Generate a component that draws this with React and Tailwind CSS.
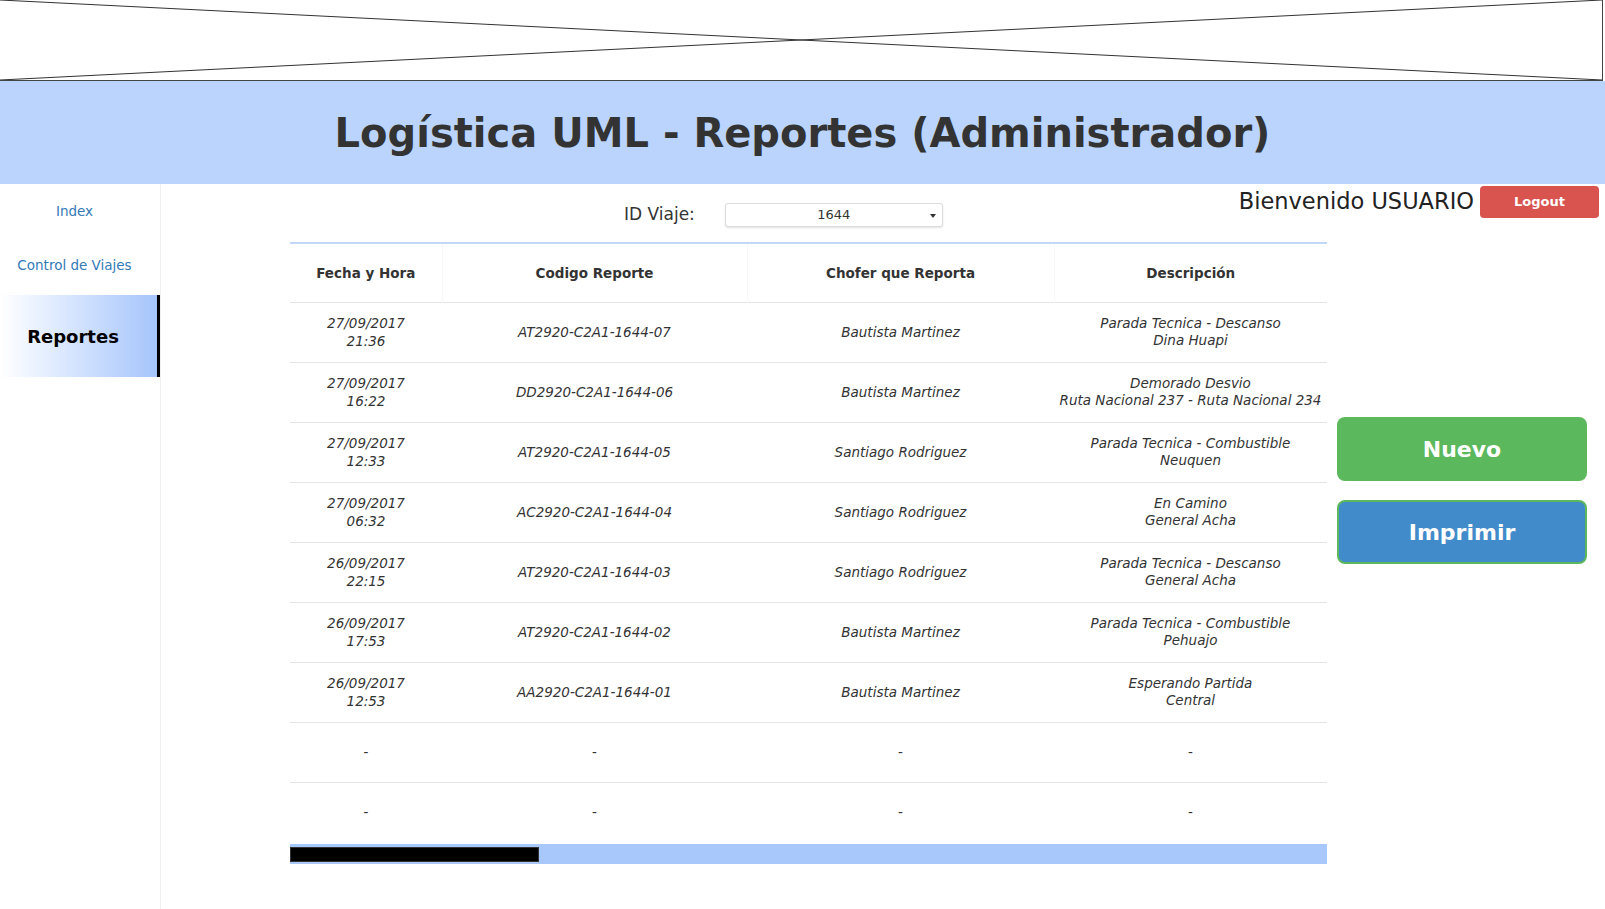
import { useState } from 'react';

const reports = [
  { date: '27/09/2017', time: '21:36', code: 'AT2920-C2A1-1644-07', driver: 'Bautista Martinez', desc: 'Parada Tecnica - Descanso', place: 'Dina Huapi' },
  { date: '27/09/2017', time: '16:22', code: 'DD2920-C2A1-1644-06', driver: 'Bautista Martinez', desc: 'Demorado Desvio', place: 'Ruta Nacional 237 - Ruta Nacional 234' },
  { date: '27/09/2017', time: '12:33', code: 'AT2920-C2A1-1644-05', driver: 'Santiago Rodriguez', desc: 'Parada Tecnica - Combustible', place: 'Neuquen' },
  { date: '27/09/2017', time: '06:32', code: 'AC2920-C2A1-1644-04', driver: 'Santiago Rodriguez', desc: 'En Camino', place: 'General Acha' },
  { date: '26/09/2017', time: '22:15', code: 'AT2920-C2A1-1644-03', driver: 'Santiago Rodriguez', desc: 'Parada Tecnica - Descanso', place: 'General Acha' },
  { date: '26/09/2017', time: '17:53', code: 'AT2920-C2A1-1644-02', driver: 'Bautista Martinez', desc: 'Parada Tecnica - Combustible', place: 'Pehuajo' },
  { date: '26/09/2017', time: '12:53', code: 'AA2920-C2A1-1644-01', driver: 'Bautista Martinez', desc: 'Esperando Partida', place: 'Central' },
];

const navItems = ['Index', 'Control de Viajes'];

export default function App() {
  const [viaje] = useState('1644');

  return (
    <div className="min-h-screen bg-white font-['DejaVu_Sans',Verdana,sans-serif] text-[#333]">
      {/* image placeholder */}
      <div className="h-[81px] w-[1603px] border-r border-b border-[#444]">
        <svg className="block h-full w-full" viewBox="0 0 1602 80" preserveAspectRatio="none">
          <line x1="0" y1="0" x2="1602" y2="80" stroke="#333" strokeWidth="1" vectorEffect="non-scaling-stroke" />
          <line x1="0" y1="80" x2="1602" y2="0" stroke="#333" strokeWidth="1" vectorEffect="non-scaling-stroke" />
        </svg>
      </div>

      <header className="h-[103px] bg-[#bad4fd] flex items-center justify-center">
        <h1 className="text-[40px] font-bold text-[#333]">Logística UML - Reportes (Administrador)</h1>
      </header>

      <div className="flex min-h-[725px]">
        {/* Sidebar */}
        <aside className="w-[161px] border-r border-[#eee] shrink-0">
          {navItems.map((item) => (
            <a key={item} href="#" className="flex h-[54px] items-center justify-center pr-[11px] text-[13.5px] text-[#337ab7]">
              {item}
            </a>
          ))}
          <div className="mt-[3px] flex h-[82px] w-[160px] items-center justify-center border-r-[3px] border-black bg-linear-to-r from-white to-[#a6c5fb] pr-[11px] text-[18px] font-bold text-black">
            Reportes
          </div>
        </aside>

        {/* Main */}
        <main className="flex-1">
          <div className="flex h-[58px] items-start justify-between">
            <div className="ml-[463px] mt-[18px] flex items-center gap-[30px]">
              <span className="text-[17px] text-[#333]">ID Viaje:</span>
              <div className="relative flex h-[24px] w-[218px] items-center justify-center rounded-[3px] border border-[#ddd] bg-white text-[13px] shadow-[0_1px_2px_rgba(0,0,0,0.12)]">
                {viaje}
                <span className="absolute right-[6px] top-[10px] h-0 w-0 border-x-[3px] border-t-[4px] border-x-transparent border-t-[#333]" />
              </div>
            </div>
            <div className="mr-[6px] mt-[1px] flex items-center gap-[6px]">
              <span className="text-[22.5px] text-[#222]">Bienvenido USUARIO</span>
              <button className="h-[32px] w-[119px] rounded-[4px] bg-[#d9534f] text-[13px] font-bold text-white">Logout</button>
            </div>
          </div>

          <div className="flex items-start">
            <div className="ml-[129px] w-[1037px]">
              <table className="w-full table-fixed border-t-2 border-[#c3d8f8] text-center text-[13.5px]">
                <colgroup>
                  <col className="w-[152px]" />
                  <col className="w-[305px]" />
                  <col className="w-[307px]" />
                  <col className="w-[273px]" />
                </colgroup>
                <thead>
                  <tr className="h-[59px] font-bold">
                    <th>Fecha y Hora</th>
                    <th className="border-l border-[#f8f8f8]">Codigo Reporte</th>
                    <th className="border-l border-[#f8f8f8]">Chofer que Reporta</th>
                    <th className="border-l border-[#f8f8f8]">Descripción</th>
                  </tr>
                </thead>
                <tbody className="italic leading-[18px]">
                  {reports.map((r) => (
                    <tr key={r.code} className="h-[60px] border-t border-[#e4e4e4]">
                      <td>
                        {r.date}
                        <br />
                        {r.time}
                      </td>
                      <td>{r.code}</td>
                      <td>{r.driver}</td>
                      <td className="leading-[17px]">
                        {r.desc}
                        <br />
                        {r.place}
                      </td>
                    </tr>
                  ))}
                  {[0, 1].map((i) => (
                    <tr key={i} className="h-[60px] border-t border-[#e4e4e4] not-italic">
                      <td>-</td>
                      <td>-</td>
                      <td>-</td>
                      <td>-</td>
                    </tr>
                  ))}
                </tbody>
              </table>
              <div className="mt-[2px] flex h-[20px] items-center bg-[#a8c7fa]">
                <div className="h-[15px] w-[249px] border border-[#333] bg-black" />
              </div>
            </div>

            <div className="ml-[10px] flex w-[250px] flex-col gap-[19px] pt-[175px]">
              <button className="h-[64px] rounded-[8px] bg-[#5cb85c] text-[22px] font-bold text-white">Nuevo</button>
              <button className="h-[64px] rounded-[8px] border-2 border-[#5cb85c] bg-[#428bca] text-[22px] font-bold text-white">Imprimir</button>
            </div>
          </div>
        </main>
      </div>
    </div>
  );
}
